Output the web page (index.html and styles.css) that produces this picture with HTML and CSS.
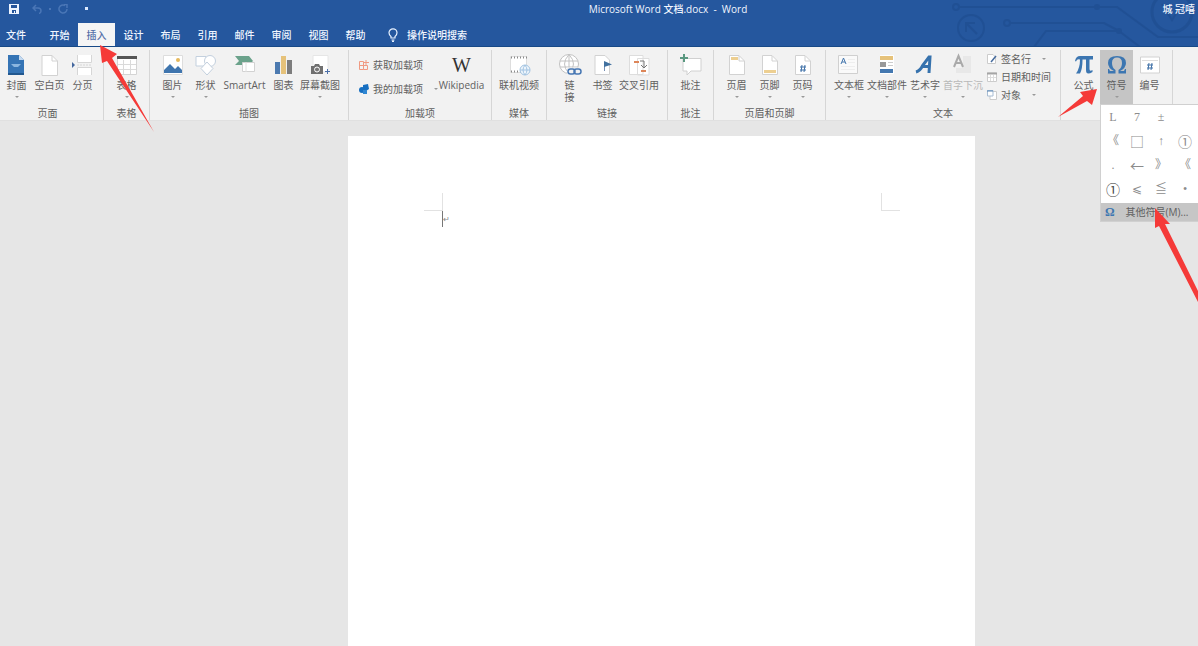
FILE: index.html
```html
<!DOCTYPE html>
<html lang="zh-CN">
<head>
<meta charset="utf-8">
<title>Microsoft Word 文档.docx - Word</title>
<link rel="stylesheet" href="styles.css">
</head>
<body>
<div class="app">
<header class="header">
  <svg class="circuit" width="248" height="46" viewBox="950 0 248 46" fill="none" stroke="#1d4a8c" stroke-width="2" aria-hidden="true">
    <circle cx="956" cy="7" r="3"/><path d="M959 7H1117L1158 37H1198"/><circle cx="1097" cy="7" r="2" fill="#1d4a8c"/>
    <circle cx="1007" cy="23" r="3"/><path d="M1010 23H1104L1119 31"/><path d="M1034 47L1046 31H1119L1140 47"/><circle cx="1119" cy="31" r="2" fill="#1d4a8c"/>
    <circle cx="971" cy="28" r="13"/><path d="M977 34L966 23M966 32V23H975"/><circle cx="1172" cy="12" r="20" stroke-width="3"/><path d="M1162 4L1172 20L1182 4"/>
  </svg>
  <div class="titlebar">
    <div class="quick">
      <button class="qbtn" aria-label="保存"><svg width="10" height="10" viewBox="0 0 10 10"><path d="M0 0H10V10H0Z" fill="#edf4ff"/><path d="M2 1H8V4H2ZM3 6H7V9H6V7H5V9H3Z" fill="#24549b"/></svg></button>
      <button class="qbtn" aria-label="撤消"><svg width="10" height="10" viewBox="0 0 10 10" fill="none" stroke="#4a76b6" stroke-width="1.5"><path d="M4 1L1 4L4 7M1 4H6Q9 4 9 7Q9 9 7 9.500"/></svg></button>
      <span class="qdot dim"></span>
      <button class="qbtn" aria-label="重复"><svg width="10" height="10" viewBox="0 0 10 10" fill="none" stroke="#4a76b6" stroke-width="1.500"><path d="M7 1.500A4 4 0 1 0 9 5M6 .5H9V4"/></svg></button>
      <span class="qdot"></span>
    </div>
    <div class="doc-title">Microsoft Word 文档.docx&nbsp; -&nbsp; Word</div>
    <div class="user">城 冠嘻</div>
  </div>
  <nav class="tabs">
    <button class="tab file">文件</button><button class="tab">开始</button><button class="tab active">插入</button><button class="tab">设计</button><button class="tab">布局</button><button class="tab">引用</button><button class="tab">邮件</button><button class="tab">审阅</button><button class="tab">视图</button><button class="tab">帮助</button>
    <button class="tell"><svg width="10" height="14" viewBox="0 0 10 14" fill="none" stroke="#e8f2ff" stroke-width="1.200"><path d="M3 10V8.500Q1 7 1 4.800A4 4 0 0 1 9 4.800Q9 7 7 8.500V10ZM3.500 12H6.500M4 13.400H6"/></svg>操作说明搜索</button>
  </nav>
</header>

<div class="ribbon">
  <section class="group">
    <div class="items">
      <button class="item"><svg class="ico" viewBox="0 0 24 24"><path d="M3 2H14L19 7V22H3Z" fill="#3574b5"/><path d="M14 2V7H19Z" fill="#c5daf0"/><path d="M6 11H16L13 14H9Z" fill="#8bb6df"/><path d="M3 20H19V22H3Z" fill="#22588f"/></svg>封面<i class="arr"></i></button>
      <button class="item"><svg class="ico" viewBox="0 0 24 24"><path d="M4 2.500H14L19.500 8V22.500H4Z" fill="#fff" stroke="#d2d2d2"/><path d="M14 2.500V8H19.500" fill="none" stroke="#d2d2d2"/></svg>空白页</button>
      <button class="item"><svg class="ico" viewBox="0 0 24 24"><path d="M6.500 2V9.500H20.500V2M6.500 22V14.500H20.500V22" fill="#fff" stroke="#d6d6d6"/><path d="M1 9L4 12L1 15Z" fill="#43669d"/><path d="M6 12H21" stroke="#d6d6d6" stroke-dasharray="2 1"/></svg>分页</button>
    </div>
    <h2 class="name first">页面</h2>
  </section>
  <section class="group">
    <div class="items mid">
      <button class="item"><svg class="ico" viewBox="0 0 24 24"><path d="M2.500 4H21.500V21.500H2.500Z" fill="#fff" stroke="#d4d4d4"/><path d="M2 3H22V6H2Z" fill="#555"/><path d="M3 11.500H21M3 16.500H21M8.500 7V21M15.500 7V21" stroke="#dadada"/></svg>表格<i class="arr"></i></button>
    </div>
    <h2 class="name">表格</h2>
  </section>
  <section class="group">
    <div class="items pad">
      <button class="item"><svg class="ico" viewBox="0 0 24 24"><path d="M2.500 2.500H21.500V21.500H2.500Z" fill="#fff" stroke="#ddd"/><circle cx="17" cy="7" r="2" fill="#e6b95c"/><path d="M3 17L9 11L14 16L17 13L21 17V20H3Z" fill="#3f75ae"/></svg>图片<i class="arr"></i></button>
      <button class="item"><svg class="ico" viewBox="0 0 24 24" fill="#fff" stroke="#c3d0de"><path d="M2 3.500H12V13H2Z"/><circle cx="16" cy="8" r="5.500"/><path d="M13 9L19 15.500L13 22L7 15.500Z"/></svg>形状<i class="arr"></i></button>
      <button class="item smart"><svg class="ico" viewBox="0 0 24 24"><path d="M2 3H16L20 8L16 12H2L6 8Z" fill="#6ba28b"/><path d="M9.500 9.500H21.500V18.500H9.500Z" fill="#fff" stroke="#d2d2d2"/><path d="M13 9V19" stroke="#e0e0e0"/></svg>SmartArt</button>
      <button class="item"><svg class="ico" viewBox="0 0 24 24"><path d="M3 9H8V21H3Z" fill="#4c7ab0"/><path d="M9 3H14V21H9Z" fill="#e6c27a"/><path d="M15 7H20V21H15Z" fill="#7d7d7d"/></svg>图表</button>
      <button class="item wide"><svg class="ico" viewBox="0 0 24 24"><path d="M5 2.500H20V19H5Z" fill="#fff" stroke="#e6e6e6"/><path d="M3 13H6L7 11H11L12 13H15V21H3Z" fill="#707070"/><circle cx="9" cy="16.500" r="2.500" fill="#777" stroke="#fff"/><path d="M17 18.500H22M19.500 16V21" stroke="#4c70a9"/></svg>屏幕截图<i class="arr"></i></button>
    </div>
    <h2 class="name">插图</h2>
  </section>
  <section class="group">
    <div class="items addins">
      <div class="stack two">
        <button class="line"><svg width="10" height="10" viewBox="0 0 10 10" fill="none" stroke="#f09a82"><path d="M.5 1.500H4.500V9.500H.5ZM.5 5.500H8.500V9.500H4.500M7 0V5M5 2.500H10"/></svg>获取加载项</button>
        <button class="line"><svg width="10" height="10" viewBox="0 0 10 10"><path d="M4 1L9 0L10 5L7 7L4 5Z" fill="#176fc1"/><circle cx="3" cy="6" r="3" fill="#176fc1"/><path d="M4 6H8V10H4Z" fill="#2f86d2"/></svg>我的加载项<i class="arr side"></i></button>
      </div>
      <button class="item smart"><span class="ico wiki">W</span>Wikipedia</button>
    </div>
    <h2 class="name">加载项</h2>
  </section>
  <section class="group">
    <div class="items mid">
      <button class="item wide"><svg class="ico" viewBox="0 0 24 24"><path d="M3.500 3.500H19.500V19.500H3.500Z" fill="#fff" stroke="#ddd"/><path d="M4 4.500H20M4 18.500H14" stroke="#8a8a8a" stroke-width="2" stroke-dasharray="1 2"/><circle cx="18" cy="17" r="5" fill="#edf5fc" stroke="#a3c4e2"/><path d="M13 17H23M18 12Q14 17 18 22Q22 17 18 12" fill="none" stroke="#a3c4e2"/></svg>联机视频</button>
    </div>
    <h2 class="name">媒体</h2>
  </section>
  <section class="group">
    <div class="items pad">
      <button class="item"><svg class="ico" viewBox="0 0 24 24" fill="none" stroke="#c2c2c2"><circle cx="11" cy="11" r="9.500" fill="#fff"/><path d="M11 1.500Q2 11 11 20.500Q20 11 11 1.500V20M2 8H20M2 14H20"/><path d="M9 18.500H24" stroke="#f2f2f2" stroke-width="8"/><rect x="10" y="16" width="7" height="5" rx="2.500" stroke="#4777b3" stroke-width="1.500"/><rect x="16" y="16" width="7" height="5" rx="2.500" stroke="#4777b3" stroke-width="1.500"/></svg>链<br>接</button>
      <button class="item"><svg class="ico" viewBox="0 0 24 24"><path d="M4 2.500H14L18.500 7V21.500H4Z" fill="#fff" stroke="#d2d2d2"/><path d="M13.500 9V18" stroke="#7790b3"/><path d="M13 8L21 11.500L13 14Z" fill="#41719f"/></svg>书签</button>
      <button class="item wide"><svg class="ico" viewBox="0 0 24 24"><path d="M2.500 2.500H16V21.500H2.500ZM10.500 5.500H22V22H10.500Z" fill="#fff" stroke="#ddd"/><path d="M7 9H12M14 18H19" stroke="#dd8659" stroke-width="2"/><path d="M13 8H17V14M14 12L17 15L20 12" fill="none" stroke="#777"/></svg>交叉引用</button>
    </div>
    <h2 class="name">链接</h2>
  </section>
  <section class="group">
    <div class="items mid">
      <button class="item"><svg class="ico" viewBox="0 0 24 24"><path d="M4 5.500H22V18H12L8 22V18H4Z" fill="#fff" stroke="#d0d0d0"/><path d="M5 1V9M1 5H9" stroke="#5a9880" stroke-width="2"/></svg>批注</button>
    </div>
    <h2 class="name">批注</h2>
  </section>
  <section class="group">
    <div class="items pad">
      <button class="item"><svg class="ico" viewBox="0 0 24 24"><path d="M4.500 2.500H14L19.500 8V21.500H4.500Z" fill="#fff" stroke="#d2d2d2"/><path d="M14 3V8H19" fill="none" stroke="#d2d2d2"/><path d="M6 4H13V7H6Z" fill="#edcf91"/></svg>页眉<i class="arr"></i></button>
      <button class="item"><svg class="ico" viewBox="0 0 24 24"><path d="M4.500 2.500H14L19.500 8V21.500H4.500Z" fill="#fff" stroke="#d2d2d2"/><path d="M14 3V8H19" fill="none" stroke="#d2d2d2"/><path d="M6 17H18V20H6Z" fill="#edcf91"/></svg>页脚<i class="arr"></i></button>
      <button class="item"><svg class="ico" viewBox="0 0 24 24"><path d="M4.500 2.500H14L19.500 8V21.500H4.500Z" fill="#fff" stroke="#d2d2d2"/><path d="M14 3V8H19" fill="none" stroke="#d2d2d2"/><path d="M11 12L10 19M14 12L13 19M9 14H15M9 17H15" stroke="#3f70a7"/></svg>页码<i class="arr"></i></button>
    </div>
    <h2 class="name">页眉和页脚</h2>
  </section>
  <section class="group">
    <div class="items text">
      <button class="item box"><svg class="ico" viewBox="0 0 24 24"><path d="M1.500 2.500H20.500V20.500H1.500Z" fill="#fafafa" stroke="#d0d0d0"/><path d="M4 11L6.500 5L9 11M5 9H8" fill="none" stroke="#4476ad"/><path d="M11 6.500H18M11 9.500H18M4 13.500H18M4 16.500H18" stroke="#eee"/></svg>文本框<i class="arr"></i></button>
      <button class="item box"><svg class="ico" viewBox="0 0 24 24"><path d="M5 2H19V21H5Z" fill="#fff"/><path d="M5 3H18V7H5Z" fill="#e6c27a"/><path d="M5 9H11V14H5Z" fill="#999"/><path d="M13 9.500H18M13 12.500H18" stroke="#ccc"/><path d="M5 16H18V20H5Z" fill="#4478b0"/></svg>文档部件<i class="arr"></i></button>
      <button class="item box"><svg class="ico" viewBox="0 0 24 24"><path d="M3 19Q7 18 10 12L16 4H17L16 20M8 13.500H17" fill="none" stroke="#3672ad" stroke-width="3"/></svg>艺术字<i class="arr"></i></button>
      <button class="item box" disabled><svg class="ico" viewBox="0 0 24 24"><path d="M12 3H20V20H5V15H12Z" fill="#e8e8e8"/><path d="M3 14L7.500 3L12 14M5 10H10" fill="none" stroke="#aaa" stroke-width="2"/></svg>首字下沉<i class="arr"></i></button>
      <div class="stack">
        <button class="line"><svg width="10" height="10" viewBox="0 0 10 10"><path d="M.5.5H6L8.500 3V9.500H.5Z" fill="#fff" stroke="#ccc"/><path d="M4 8L9 2" stroke="#466b9d" stroke-width="1.500"/></svg>签名行<i class="arr side"></i></button>
        <button class="line"><svg width="10" height="10" viewBox="0 0 10 10"><path d="M.5 1H9.500V9.500H.5Z" fill="#fff" stroke="#ccc"/><path d="M0 1.500H10" stroke="#a5a5a5" stroke-width="2"/><path d="M1 5.500H9M3.500 3V9M6.500 3V9" stroke="#ddd"/></svg>日期和时间</button>
        <button class="line"><svg width="10" height="10" viewBox="0 0 10 10"><path d="M3 1.500H9.500V9.500H3Z" fill="#fff" stroke="#ccc"/><path d="M.5.5H6V6H.5Z" fill="#fff" stroke="#a8bdd3"/><path d="M0 1H6" stroke="#5b86b4"/></svg>对象<i class="arr side"></i></button>
      </div>
    </div>
    <h2 class="name">文本</h2>
  </section>
  <section class="group">
    <div class="items pad">
      <button class="item"><svg class="ico" viewBox="0 0 24 24"><path d="M3 8Q4 3 8 3H21V6.500H17.500V16Q17.500 19 20.500 17V19Q14 23 14 17V6.500H10.500Q10.500 16 8 20.500H4Q8 15 8 6.500Q5 5.500 4 8.500Z" fill="#3c76b1"/></svg>公式</button>
      <div class="symbol">
        <button class="item selected" aria-expanded="true"><svg class="ico" viewBox="0 0 24 24"><path d="M3 20V16H4L5 18H9Q3 15 3 10Q3 3 12 3Q21 3 21 10Q21 15 15 18H19L20 16H21V20.500H13.500V17Q17 15 17 10Q17 4.500 12 4.500Q7 4.500 7 10Q7 15 10.500 17V20.500H3Z" fill="#3c76b1"/></svg>符号<i class="arr"></i></button>
        <div class="menu">
          <div class="symbols">
            <button>L</button><button>7</button><button>±</button><span></span>
            <button>《</button><button class="big">□</button><button>↑</button><button class="big">①</button>
            <button>.</button><button class="big">←</button><button>》</button><button>《</button>
            <button class="big dark">①</button><button>⩽</button><button>≦</button><button>•</button>
          </div>
          <button class="more"><span class="omega">Ω</span>其他符号(M)...</button>
        </div>
      </div>
      <button class="item"><svg class="ico" viewBox="0 0 24 24"><path d="M2.500 4H21.500V20H2.500Z" fill="#fff" stroke="#d2d2d2"/><path d="M4 7.500H20" stroke="#ddd"/><path d="M11 10L10 17M14 10L13 17M9 12H15M9 15H15" stroke="#3f70a7"/></svg>编号</button>
    </div>
  </section>
  <section class="group last"></section>
</div>

<main class="workspace">
  <article class="page">
    <div class="marks"><span class="mark left"></span><span class="mark right"></span></div>
    <p class="para"><span class="caret"></span>↵</p>
  </article>
</main>

<svg class="pointers" width="1198" height="310" viewBox="0 0 1198 310" fill="#f53a38" aria-hidden="true">
  <path d="M100 45L117 54L112 58L154 132L107 61L102 63Z"/>
  <path d="M1097 89L1092 105L1087 101L1058 117L1083 96L1080 92Z"/>
  <path d="M1155 208L1170 224L1165 224L1198 291V302L1159 226L1155 228Z"/>
</svg>
</div>
</body>
</html>
```
FILE: styles.css
```css
* { box-sizing: border-box; }
body {
  margin: 0;
  font: 10px/12px "Open Sans", "Noto Sans CJK SC", sans-serif;
  color: #606060;
  background: #e6e6e6;
}
button {
  font: inherit;
  color: inherit;
  background: none;
  border: 0;
  padding: 0;
  margin: 0;
  white-space: nowrap;
}
.app {
  position: relative;
  min-height: 100vh;
  display: flex;
  flex-direction: column;
  overflow: hidden;
}

.header {
  position: relative;
  background: #25579e;
  color: #f1f6ff;
  border-bottom: 1px solid #174987;
}
.circuit { position: absolute; right: 0; top: 0; opacity: .5; }
.titlebar {
  position: relative;
  display: grid;
  grid-template-columns: 589fr auto 451fr;
  height: 23px;
  padding-bottom: 6px;
  align-items: center;
}
.quick { display: flex; align-items: center; gap: 13px; padding-left: 9px; }
.qbtn { display: flex; }
.qdot { width: 3px; height: 3px; margin-left: 4px; background: #dceaff; }
.qdot.dim { width: 2px; height: 2px; margin: 0 -6px; background: #4a76b6; }
.doc-title { font-weight: 500; white-space: nowrap; }
.user { text-align: right; padding-right: 3px; font-weight: 500; }
.tabs { position: relative; display: flex; height: 23px; font-weight: 500; }
.tab { width: 37px; }
.tab.file { width: 41px; padding-right: 9px; }
.tab.active { background: #f5f5f5; color: #566fa8; }
.tell { display: flex; align-items: center; gap: 9px; margin-left: 14px; }

.ribbon {
  display: grid;
  grid-template-columns:
    minmax(0, 104fr) minmax(0, 46fr) minmax(0, 199fr) minmax(0, 143fr)
    minmax(0, 55fr) minmax(0, 121fr) minmax(0, 46fr) minmax(0, 112fr)
    minmax(0, 235fr) minmax(0, 112fr) minmax(0, 25fr);
  height: 74px;
  background: #f2f2f2;
  border-bottom: 1px solid #e0e0e0;
}
.group {
  display: flex;
  flex-direction: column;
  justify-content: space-between;
  margin: 3px 0 0;
  border-right: 1px solid #d6d6d6;
}
.group.last { border: 0; }
.items { display: flex; height: 54px; }
.items.mid { justify-content: center; }
.items.pad { padding-left: 6px; }
.items.addins { padding-left: 10px; justify-content: space-between; padding-right: 7px; }
.items.text { padding-left: 4px; }
.item {
  flex: none;
  width: 33px;
  height: 54px;
  display: flex;
  flex-direction: column;
  align-items: center;
  padding-top: 3px;
}
.item.wide { width: 40px; }
.item.smart { width: 45px; }
.item.box { width: 38px; }
.item:disabled { color: #b8b8b8; }
.item.selected { background: #c5c5c5; }
.ico { width: 24px; height: 24px; margin-bottom: 2px; flex: none; }
.wiki { font: 20px/24px "Liberation Serif", serif; color: #333; text-align: center; }
.arr {
  margin-top: 5px;
  border: 2px solid transparent;
  border-top-color: #999;
  border-bottom: 0;
}
.arr.side { margin: 0 0 0 7px; }
.stack { display: flex; flex-direction: column; padding: 0 0 0 5px; }
.stack.two { padding: 3px 0 0; }
.stack .line { height: 18px; }
.stack.two .line { height: 24px; }
.line { display: flex; align-items: center; gap: 4px; }
.name { margin: 0; font-size: 10px; line-height: 14px; font-weight: 400; text-align: center; }
.name.first { padding-right: 8px; }

.symbol { position: relative; }
.menu {
  position: absolute;
  z-index: 2;
  top: 54px;
  left: 0;
  width: 98px;
  background: #fff;
  border: 1px solid #d0d0d0;
  border-right: 0;
}
.symbols {
  display: grid;
  grid-template-columns: repeat(4, 24px);
  grid-auto-rows: 24px;
  height: 98px;
  font: 12px/24px "Liberation Serif", "Noto Sans CJK SC", serif;
  color: #8c8c8c;
}
.symbols .big { font: 14px/24px "Noto Sans CJK SC", sans-serif; }
.symbols .dark { color: #444; }
.more {
  display: flex;
  align-items: center;
  width: 100%;
  height: 18px;
  padding-left: 4px;
  background: #c6c6c6;
  gap: 11px;
}
.omega { font: bold 12px/18px "Liberation Serif", serif; color: #3c76b1; }

.workspace {
  flex: 1;
  display: grid;
  grid-template-columns: 348fr 627fr 223fr;
  padding-top: 15px;
}
.page { grid-column: 2; background: #fff; padding: 57px 75px 0 76px; }
.marks { display: flex; justify-content: space-between; }
.mark { width: 19px; height: 18px; border-bottom: 1px solid #e2e2e2; }
.mark.left { border-right: 1px solid #e2e2e2; }
.mark.right { border-left: 1px solid #e2e2e2; }
.para { display: flex; align-items: center; margin: 0 0 0 18px; height: 16px; font-size: 8px; color: #888; }
.caret { width: 1px; height: 16px; background: #777; }

.pointers { position: absolute; z-index: 3; top: 0; left: 0; pointer-events: none; }
```
